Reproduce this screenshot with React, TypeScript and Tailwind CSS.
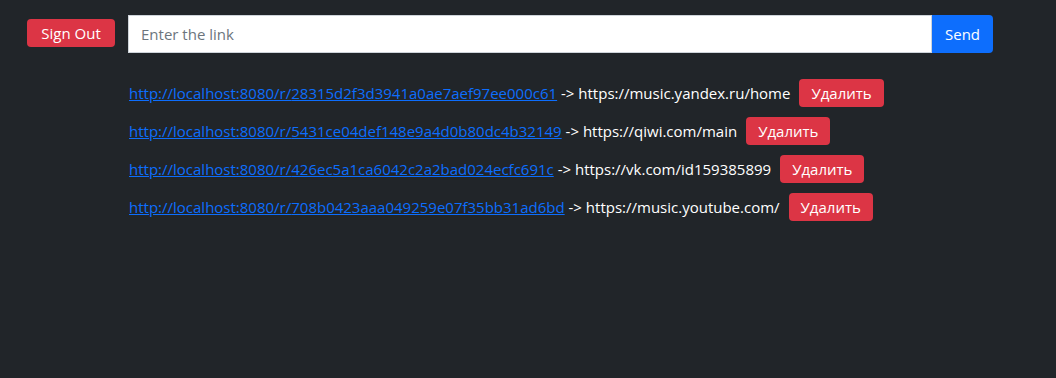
import React from "react";

interface ShortLink {
  id: string;
  target: string;
}

const links: ShortLink[] = [
  { id: "28315d2f3d3941a0ae7aef97ee000c61", target: "https://music.yandex.ru/home" },
  { id: "5431ce04def148e9a4d0b80dc4b32149", target: "https://qiwi.com/main" },
  { id: "426ec5a1ca6042c2a2bad024ecfc691c", target: "https://vk.com/id159385899" },
  { id: "708b0423aaa049259e07f35bb31ad6bd", target: "https://music.youtube.com/" },
];

const App: React.FC = () => {
  return (
    <div className="min-h-screen bg-[#212529] font-['Open_Sans',sans-serif] text-[15px] text-white">
      {/* Top bar */}
      <div className="flex items-start pl-[27px] pr-[63px] pt-[15px]">
        <button
          type="button"
          className="mt-[4px] h-[28px] w-[88px] rounded-[4px] bg-[#dc3545] text-[15px] leading-none text-white"
        >
          Sign Out
        </button>
        <div className="ml-[13px] flex h-[38px] flex-1">
          <input
            type="text"
            placeholder="Enter the link"
            className="min-w-0 flex-1 border border-[#ced4da] bg-white px-3 text-[15px] text-[#212529] outline-none placeholder:text-[#6c757d]"
          />
          <button
            type="button"
            className="w-[61px] rounded-r-[4px] bg-[#0d6efd] text-[15px] text-white"
          >
            Send
          </button>
        </div>
      </div>

      {/* Links */}
      <div className="mt-[21px] pl-[129px]">
        {links.map((l) => (
          <div key={l.id} className="flex h-[38px] items-center">
            <a href="#" className="text-[#0d6efd] underline">
              http://localhost:8080/r/{l.id}
            </a>
            <span className="whitespace-pre"> -&gt; {l.target}</span>
            <button
              type="button"
              className="ml-[9px] h-[28px] rounded-[4px] bg-[#dc3545] px-[12px] text-[15px] leading-none text-white"
            >
              Удалить
            </button>
          </div>
        ))}
      </div>
    </div>
  );
};

export default App;
